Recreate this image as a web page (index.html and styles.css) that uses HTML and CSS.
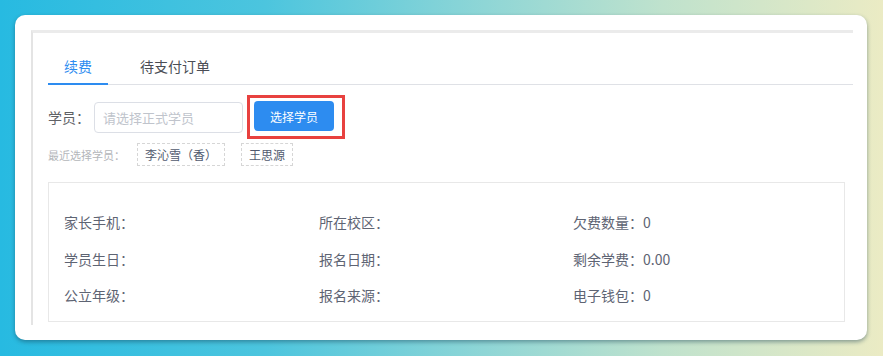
FILE: index.html
```html
<!DOCTYPE html>
<html lang="zh-CN">

<head>
    <meta charset="UTF-8">
    <meta name="viewport" content="width=device-width, initial-scale=1.0">
    <title>续费</title>
    <link rel="stylesheet" href="styles.css">
</head>

<body>
    <div class="card">
        <div class="panel">
            <div class="tabs">
                <div class="tab active">续费</div>
                <div class="tab">待支付订单</div>
            </div>

            <div class="form-row">
                <span class="label">学员：</span>
                <input class="student-input" type="text" placeholder="请选择正式学员">
                <div class="mark">
                    <button class="btn-primary">选择学员</button>
                </div>
            </div>

            <div class="recent-row">
                <span class="recent-label">最近选择学员：</span>
                <span class="tag">李沁雪（香）</span>
                <span class="tag">王思源</span>
            </div>

            <div class="info-box">
                <div class="info-item">家长手机：</div>
                <div class="info-item">所在校区：</div>
                <div class="info-item">欠费数量：0</div>
                <div class="info-item">学员生日：</div>
                <div class="info-item">报名日期：</div>
                <div class="info-item">剩余学费：0.00</div>
                <div class="info-item">公立年级：</div>
                <div class="info-item">报名来源：</div>
                <div class="info-item">电子钱包：0</div>
            </div>
        </div>
    </div>
</body>

</html>
```

FILE: styles.css
```css
body {
    margin: 0;
    width: 883px;
    height: 356px;
    overflow: hidden;
    background: linear-gradient(to right, #27bae1 0%, #4cc5de 30%, #8fd6d6 55%, #bfe2cd 75%, #ebebc4 100%);
    font-family: "Noto Sans CJK SC", "Noto Sans", sans-serif;
    color: #606266;
}

.card {
    margin: 15px 0 0 15px;
    width: 852px;
    height: 325px;
    box-sizing: border-box;
    padding: 15px 14px 15px 16px;
    background: #fff;
    border-radius: 10px;
    box-shadow: 0 2px 4px rgba(20, 60, 80, 0.45);
}

.panel {
    height: 100%;
    box-sizing: border-box;
    border-top: 3px solid #ebebeb;
    border-left: 2px solid #e4e4e4;
    padding: 17px 0 0 15px;
    overflow: hidden;
}

.tabs {
    display: flex;
    height: 34px;
    border-bottom: 1px solid #dfe1e6;
}

.tab {
    padding: 0 16px;
    font-size: 14px;
    line-height: 33px;
    color: #4a4d55;
}

.tab + .tab {
    margin-left: 16px;
}

.tab.active {
    color: #2d8cf0;
    border-bottom: 2px solid #2d8cf0;
    margin-bottom: -1px;
}

/* form */
.form-row {
    display: flex;
    align-items: center;
    margin-top: 10px;
    height: 44px;
}

.label {
    font-size: 14px;
    color: #606266;
    width: 46px;
}

.student-input {
    width: 149px;
    height: 31px;
    box-sizing: border-box;
    border: 1px solid #dcdfe6;
    border-radius: 4px;
    padding: 0 8px;
    font-family: inherit;
    font-size: 13px;
    outline: none;
}

.student-input::placeholder {
    color: #c0c4cc;
}

.mark {
    margin-left: 4px;
    border: 3px solid #e8413f;
    padding: 3px 8px 5px 4px;
}

.btn-primary {
    display: block;
    width: 80px;
    height: 30px;
    border: none;
    border-radius: 4px;
    background: #2d8cf0;
    color: #fff;
    font-family: inherit;
    font-size: 12px;
}

.recent-row {
    display: flex;
    align-items: center;
    margin-top: 4px;
    height: 23px;
}

.recent-label {
    font-size: 11px;
    color: #b4b6ba;
    width: 89px;
}

.tag {
    border: 1px dashed #d6d6d6;
    height: 23px;
    box-sizing: border-box;
    line-height: 21px;
    padding: 0 7px;
    font-size: 12px;
    color: #515a6e;
    margin-right: 16px;
}

/* info */
.info-box {
    margin: 16px 8px 0 0;
    border: 1px solid #e8e8e8;
    padding: 21px 0 7px 15px;
    display: grid;
    grid-template-columns: 255px 254px 255px;
}

.info-item {
    font-size: 14px;
    line-height: 36.5px;
    color: #5e6473;
}
```
